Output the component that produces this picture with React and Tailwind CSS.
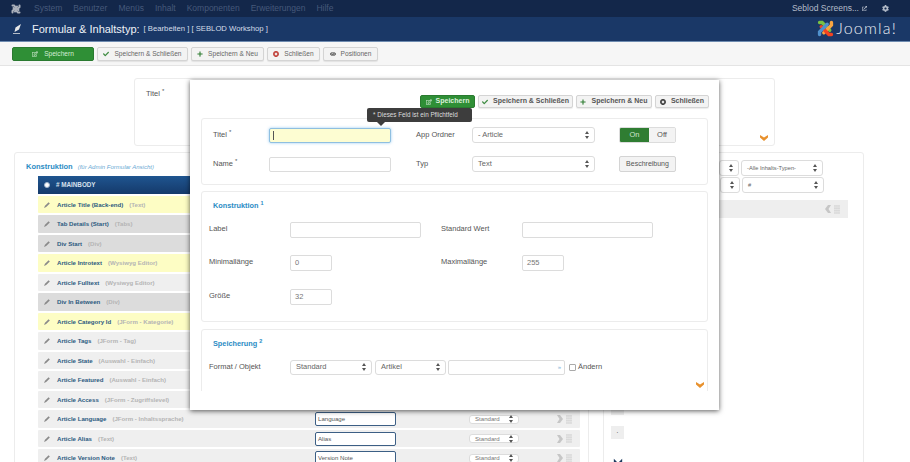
import { FaCheck, FaCog, FaExternalLinkAlt, FaEye, FaPlus, FaRegEdit, FaTimesCircle } from "react-icons/fa";

const rows = [
  { name: "Article Title (Back-end)", type: "(Text)", bg: "bg-[#fdfdc4]" },
  { name: "Tab Details (Start)", type: "(Tabs)", bg: "bg-[#dcdcdc]" },
  { name: "Div Start", type: "(Div)", bg: "bg-[#dcdcdc]" },
  { name: "Article Introtext", type: "(Wysiwyg Editor)", bg: "bg-[#fdfdc4]" },
  { name: "Article Fulltext", type: "(Wysiwyg Editor)", bg: "bg-[#efefef]" },
  { name: "Div In Between", type: "(Div)", bg: "bg-[#dcdcdc]" },
  { name: "Article Category Id", type: "(JForm - Kategorie)", bg: "bg-[#fdfdc4]" },
  { name: "Article Tags", type: "(JForm - Tag)", bg: "bg-[#efefef]" },
  { name: "Article State", type: "(Auswahl - Einfach)", bg: "bg-[#efefef]" },
  { name: "Article Featured", type: "(Auswahl - Einfach)", bg: "bg-[#efefef]" },
  { name: "Article Access", type: "(JForm - Zugriffslevel)", bg: "bg-[#efefef]" },
  { name: "Article Language", type: "(JForm - Inhaltssprache)", bg: "bg-[#efefef]", input: "Language" },
  { name: "Article Alias", type: "(Text)", bg: "bg-[#efefef]", input: "Alias" },
  { name: "Article Version Note", type: "(Text)", bg: "bg-[#efefef]", input: "Version Note" },
];

function Updown() {
  return (
    <svg width="4" height="8" viewBox="0 0 4 8" className="shrink-0">
      <path d="M2 0l2 3H0zM2 8L0 5h4z" fill="#555" />
    </svg>
  );
}

function Select({ label, className }) {
  return (
    <div className={`flex items-center justify-between bg-white border border-[#dcdcdc] rounded-[3px] px-[5px] text-[#666] ${className}`}>
      <span>{label}</span>
      <Updown />
    </div>
  );
}

function Input({ value, className }) {
  return (
    <div className={`flex items-center bg-white border border-[#dcdcdc] rounded-[2px] px-[4px] text-[#777] ${className}`}>
      {value}
    </div>
  );
}

function Btn({ icon, label, className }) {
  return (
    <button className={`flex items-center justify-center gap-[5px] h-[14px] bg-[#f3f3f3] border border-[#d4d4d4] rounded-[2px] shadow-[0_1px_1px_rgba(0,0,0,0.08)] ${className}`}>
      {icon}
      <span>{label}</span>
    </button>
  );
}

function Chevron({ className }) {
  return (
    <svg width="8" height="6" viewBox="0 0 8 6" className={className}>
      <path d="M0 0l4 2.6L8 0v2.6L4 6 0 2.6z" fill="#e8912d" />
    </svg>
  );
}

function Grip() {
  return (
    <svg width="6" height="9" viewBox="0 0 6 9" className="shrink-0">
      <path d="M0 1h6M0 3.3h6M0 5.6h6M0 8h6M1 0v9M3 0v9M5 0v9" stroke="#d2d2d2" strokeWidth="0.7" fill="none" />
    </svg>
  );
}

function Arrow({ left }) {
  return (
    <svg width="6" height="8" viewBox="0 0 6 8" className="shrink-0">
      <path d={left ? "M6 0H3L0 4l3 4h3L3.5 4z" : "M0 0h3l3 4-3 4H0l2.5-4z"} fill="#c6c6c6" />
    </svg>
  );
}

function JoomlaMark({ size, colored }) {
  const c = colored ? ["#7ac143", "#f9a541", "#f44321", "#5091cd"] : ["#aab0bb", "#aab0bb", "#aab0bb", "#aab0bb"];
  return (
    <svg width={size} height={size} viewBox="0 0 20 20" className="shrink-0">
      <g fill="none" strokeWidth="4" strokeLinecap="round">
        <path d="M3 3h3l9 9" stroke={c[0]} />
        <path d="M17 3v3l-9 9" stroke={c[1]} />
        <path d="M17 17h-3L5 8" stroke={c[2]} />
        <path d="M3 17v-3l9-9" stroke={c[3]} />
      </g>
    </svg>
  );
}

function Row({ row }) {
  return (
    <div className={`flex items-center h-[17.5px] rounded-[1px] text-[6.1px] ${row.bg}`}>
      <svg width="6" height="6" viewBox="0 0 6 6" className="ml-[6px] shrink-0">
        <path d="M0 6l1-2.2L4.6 0.2l1.2 1.2L2.2 5z" fill="#8a8a8a" />
      </svg>
      <span className="ml-[7px] font-bold text-[#2c5a80]">{row.name}</span>
      <span className="ml-[6px] font-bold text-[#b4b4b4]">{row.type}</span>
      <div className="ml-auto flex items-center">
        {row.input && (
          <div className="w-[81px] h-[14px] mr-[73px] flex items-center px-[2px] bg-white border border-[#3c5f85] rounded-[2px] text-[#555]">
            {row.input}
          </div>
        )}
        <div className="w-[50px] h-[9px] flex items-center justify-between px-[5px] bg-white border border-[#dcdcdc] rounded-[3px] text-[#777]">
          <span>Standard</span>
          <Updown />
        </div>
        <div className="ml-[38px]"><Arrow /></div>
        <div className="ml-[3px] mr-[8px]"><Grip /></div>
      </div>
    </div>
  );
}

export default function App() {
  return (
    <div className="relative h-[462px] w-[910px] overflow-hidden bg-white font-['Liberation_Sans',sans-serif]">
      {/* top bar */}
      <div className="flex items-center h-[17px] bg-[#13274a] text-[8.5px] text-[#46597a]">
        <div className="ml-[11px]"><JoomlaMark size={10} /></div>
        <div className="ml-[13px] flex gap-[11px]">
          <span>System</span>
          <span>Benutzer</span>
          <span>Menüs</span>
          <span>Inhalt</span>
          <span>Komponenten</span>
          <span>Erweiterungen</span>
          <span>Hilfe</span>
        </div>
        <div className="ml-auto mr-[21px] flex items-center text-[#b4bcc9]">
          <span>Seblod Screens...</span>
          <FaExternalLinkAlt className="ml-[3px] w-[5px] h-[5px]" />
          <FaCog className="ml-[15px] w-[7px] h-[7px]" />
        </div>
      </div>

      {/* title */}
      <div className="flex items-center h-[25px] bg-[#1a3867] border-b border-[#6e8bb0] text-white">
        <svg width="9" height="10" viewBox="0 0 9 10" className="ml-[13px] shrink-0">
          <path d="M8 0L2.5 3.5 1.5 8 6 5.5zM0 9.2h7V10H0z" fill="#e8e8e8" />
        </svg>
        <span className="ml-[10px] text-[11px] text-[#eef2f7]">Formular &amp; Inhaltstyp:</span>
        <span className="ml-[4px] text-[7.7px] text-[#d5dde8]">[ Bearbeiten ] [ SEBLOD Workshop ]</span>
        <div className="ml-auto mr-[13px] mb-[2px] flex items-center gap-[2px]">
          <JoomlaMark size={17} colored />
          <span className="font-['Lato',sans-serif] font-light text-[16px] tracking-[1.2px] leading-none text-[#e9eef5]">Joomla!</span>
        </div>
      </div>

      {/* toolbar */}
      <div className="flex items-center gap-[3px] h-[24px] pl-[12px] bg-[#f6f6f6] border-b border-[#e4e4e4] text-[6.6px] text-[#666]">
        <button className="flex items-center justify-center gap-[6px] w-[82px] h-[14px] bg-[#2f8f36] border border-[#2a7a30] rounded-[2px] text-[#d3ecd4]">
          <FaRegEdit className="w-[6px] h-[6px] text-[#dcefdc]" />
          <span>Speichern</span>
        </button>
        <Btn className="w-[91px]" label="Speichern & Schließen" icon={<FaCheck className="w-[6px] h-[6px] text-[#3d8b40]" />} />
        <Btn className="w-[73px]" label="Speichern & Neu" icon={<FaPlus className="w-[6px] h-[6px] text-[#2f7d32]" />} />
        <Btn className="w-[53px]" label="Schließen" icon={<FaTimesCircle className="w-[6px] h-[6px] text-[#bd362f]" />} />
        <Btn className="w-[55px]" label="Positionen" icon={<FaEye className="w-[6px] h-[6px] text-[#555]" />} />
      </div>

      {/* page behind the dialog */}
      <div className="pt-[12px]">
        <div className="relative ml-[134px] w-[641px] h-[68px] border border-[#ececec] rounded-[3px] pt-[9px] pl-[11px] text-[7.5px] text-[#555]">
          Titel <sup className="text-[6px]">*</sup>
          <Chevron className="absolute right-[6px] bottom-[4px]" />
        </div>
        <div className="mt-[6px] flex items-start">
          <div className="ml-[14px] w-[575px] h-[320px] border border-[#ececec] rounded-[3px] pt-[8px]">
            <div className="ml-[11px] flex items-baseline gap-[5px]">
              <span className="font-bold text-[7.5px] text-[#2a8cc4]">Konstruktion</span>
              <span className="italic text-[6px] text-[#6aa9d3]">(für Admin Formular Ansicht)</span>
            </div>
            <div className="ml-[23px] mr-[8px] mt-[4px] flex flex-col gap-[2px]">
              <div className="flex items-center h-[17.5px] bg-gradient-to-b from-[#1f5590] to-[#153a6b] font-bold text-[6.3px] text-[#d6e0ec]">
                <span className="ml-[6px] w-[6px] h-[6px] rounded-full bg-white border border-[#9fb4cc]" />
                <span className="ml-[6px]"># MAINBODY</span>
              </div>
              {rows.map((row) => (
                <Row key={row.name} row={row} />
              ))}
            </div>
          </div>
          <div className="ml-[14px] w-[261px] h-[320px] border border-[#ececec] rounded-[3px] pt-[7px] text-[5.7px]">
            <div className="flex justify-end gap-[2px] mr-[40px]">
              <Select label="" className="w-[20px] h-[16px]" />
              <Select label="-Alle Inhalts-Typen-" className="w-[82px] h-[16px]" />
            </div>
            <div className="flex justify-end gap-[2px] mt-[1px] mr-[39px]">
              <Select label="" className="w-[20px] h-[16px]" />
              <Select label="#" className="w-[82px] h-[16px]" />
            </div>
            <div className="flex items-center justify-end gap-[3px] h-[18px] mt-[7px] mr-[15px] ml-[8px] pr-[8px] bg-[#eeeeee]">
              <Arrow left />
              <Grip />
            </div>
            <div className="ml-[7px] mt-[184px] flex flex-col items-start">
              <div className="flex items-center justify-center w-[13px] h-[13px] bg-[#eeeeee] text-[7px] leading-none text-[#444]">-</div>
              <div className="mt-[11px] flex items-center justify-center w-[13px] h-[13px] bg-[#eeeeee] text-[7px] leading-none text-[#444]">·</div>
              <svg width="10" height="10" viewBox="0 0 12 10" className="mt-[19px] ml-[2px]">
                <path d="M1 0l5 5 5-5v10L6 6 1 10z" fill="#1d3a5f" />
              </svg>
            </div>
          </div>
        </div>
      </div>

      {/* dialog */}
      <div className="absolute left-[190px] top-[80px] w-[529px] h-[330px] bg-white shadow-[0_1px_5px_rgba(0,0,0,0.65)]">
        <div className="absolute left-[177px] top-[28px] z-10 flex items-center h-[14px] w-[105px] px-[6px] bg-[#3d3d3d] rounded-[2px] text-[6.3px] whitespace-nowrap text-[#dddddd]">
          * Dieses Feld ist ein Pflichtfeld
          <span className="absolute left-[10px] top-[14px] border-x-[4px] border-x-transparent border-t-[4px] border-t-[#3d3d3d]" />
        </div>

        <div className="h-[311px] overflow-hidden px-[11px]">
          <div className="flex justify-end gap-[3px] -mr-[1px] pt-[15px] text-[7px] font-bold text-[#555]">
            <button className="flex items-center justify-center gap-[4px] w-[55px] h-[13px] bg-[#2f8f36] border border-[#2a7a30] rounded-[2px] text-[#dcefdc]">
              <FaRegEdit className="w-[6px] h-[6px]" />
              <span>Speichern</span>
            </button>
            <Btn className="w-[95px] !h-[13px]" label="Speichern & Schließen" icon={<FaCheck className="w-[6px] h-[6px] text-[#3d8b40]" />} />
            <Btn className="w-[76px] !h-[13px]" label="Speichern & Neu" icon={<FaPlus className="w-[6px] h-[6px] text-[#2f7d32]" />} />
            <Btn className="w-[54px] !h-[13px]" label="Schließen" icon={<FaTimesCircle className="w-[6px] h-[6px] text-[#333]" />} />
          </div>

          {/* fieldset: title */}
          <div className="mt-[10px] h-[67px] border border-[#ececec] rounded-[3px] pl-[11px] pt-[8px] text-[7.5px] text-[#555]">
            <div className="flex items-center h-[16px]">
              <span className="w-[56px]">Titel <sup className="text-[6px]">*</sup></span>
              <div className="flex items-center w-[122px] h-[15px] px-[3px] bg-[#fdfdd2] border border-[#8fbfe0] rounded-[2px] shadow-[0_0_3px_rgba(82,168,236,0.6)]">
                <span className="w-[1px] h-[9px] bg-[#555]" />
              </div>
              <span className="ml-[25px] w-[56px]">App Ordner</span>
              <Select label="- Article" className="w-[123px] h-[16px]" />
              <div className="ml-[24px] flex w-[57px] h-[16px] rounded-[2px] border border-[#dcdcdc] overflow-hidden">
                <span className="flex items-center justify-center w-[29px] bg-[#2f7d32] text-[#cfe6cf]">On</span>
                <span className="flex items-center justify-center flex-1 bg-[#f3f3f3]">Off</span>
              </div>
            </div>
            <div className="flex items-center h-[16px] mt-[13px]">
              <span className="w-[56px]">Name <sup className="text-[6px]">*</sup></span>
              <Input className="w-[122px] h-[15px]" value="" />
              <span className="ml-[25px] w-[56px]">Typ</span>
              <Select label="Text" className="w-[123px] h-[16px]" />
              <button className="ml-[24px] w-[57px] h-[16px] text-[7px] bg-[#f3f3f3] border border-[#d4d4d4] rounded-[2px]">Beschreibung</button>
            </div>
          </div>

          {/* fieldset: Konstruktion */}
          <div className="mt-[6px] h-[131px] border border-[#ececec] rounded-[3px] pl-[7px] pt-[9px] text-[7.5px] text-[#555]">
            <div className="ml-[4px] h-[11px] font-bold text-[7.3px] text-[#2a8cc4]">Konstruktion <sup className="text-[5.5px]">1</sup></div>
            <div className="mt-[10px] flex h-[16px]">
              <span className="w-[81px] pt-[1px]">Label</span>
              <Input className="w-[131px] h-[16px]" value="" />
              <span className="ml-[20px] w-[81px] pt-[1px]">Standard Wert</span>
              <Input className="w-[131px] h-[16px]" value="" />
            </div>
            <div className="mt-[17px] flex h-[16px]">
              <span className="w-[81px] pt-[1px]">Minimallänge</span>
              <Input className="w-[42px] h-[16px]" value="0" />
              <span className="ml-[109px] w-[81px] pt-[1px]">Maximallänge</span>
              <Input className="w-[42px] h-[16px]" value="255" />
            </div>
            <div className="mt-[18px] flex h-[16px]">
              <span className="w-[81px] pt-[1px]">Größe</span>
              <Input className="w-[42px] h-[16px]" value="32" />
            </div>
          </div>

          {/* fieldset: Speicherung */}
          <div className="relative mt-[7px] h-[80px] border border-[#ececec] rounded-[3px] pl-[7px] pt-[9px] text-[7.5px] text-[#555]">
            <div className="ml-[4px] h-[11px] font-bold text-[7.3px] text-[#2a8cc4]">Speicherung <sup className="text-[5.5px]">2</sup></div>
            <div className="mt-[9px] flex items-center h-[16px]">
              <span className="w-[81px]">Format / Objekt</span>
              <Select label="Standard" className="w-[82px] h-[15px]" />
              <Select label="Artikel" className="ml-[3px] w-[71px] h-[15px]" />
              <div className="ml-[2px] flex items-center justify-end w-[117px] h-[15px] pr-[3px] bg-white border border-[#dcdcdc] rounded-[2px] text-[6px] text-[#7ab0d6]">»</div>
              <span className="ml-[4px] w-[7px] h-[7px] bg-white border border-[#aaaaaa] rounded-[1px]" />
              <span className="ml-[2px]">Ändern</span>
            </div>
            <Chevron className="absolute right-[3px] top-[52px]" />
          </div>
        </div>
      </div>
    </div>
  );
}
